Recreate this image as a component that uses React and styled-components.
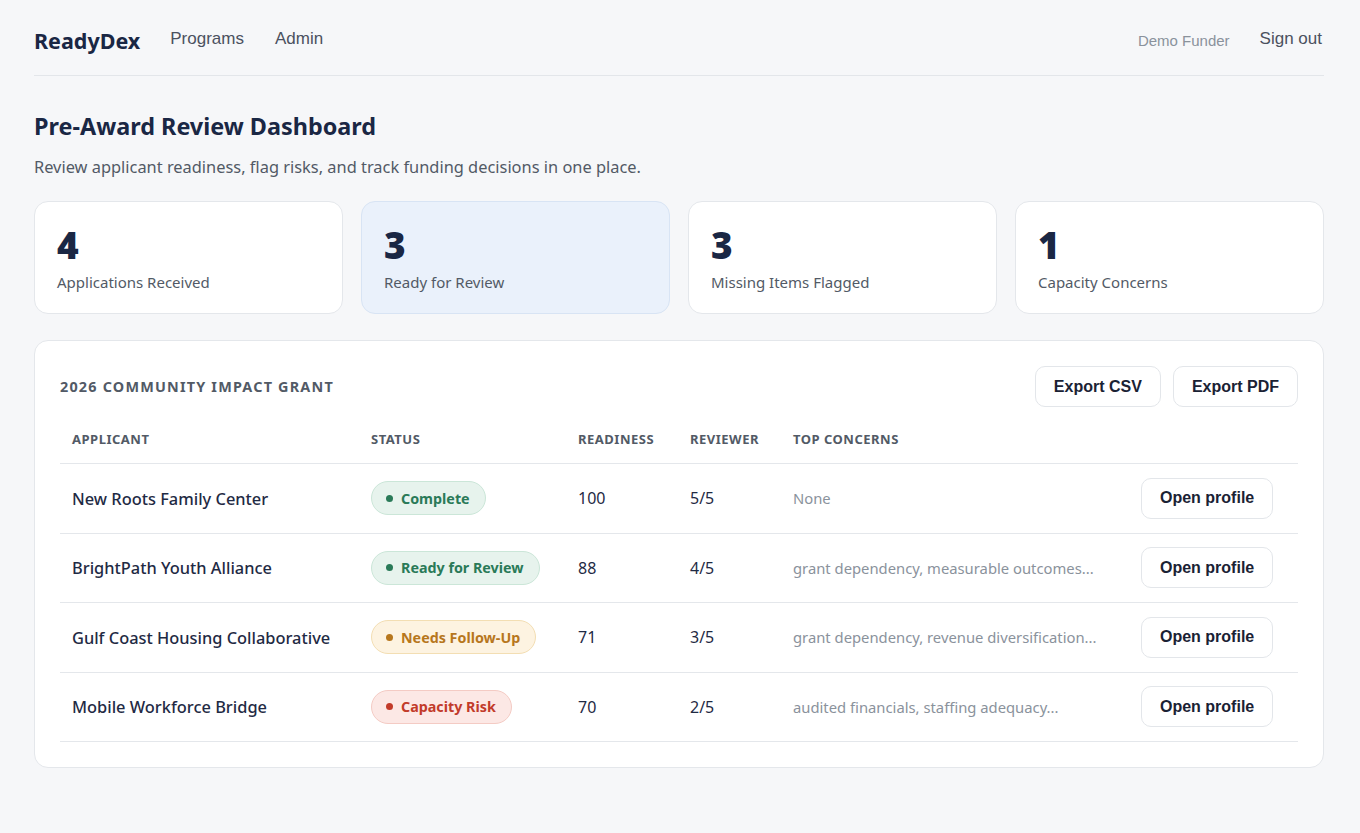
import React from "react";
import styled, { createGlobalStyle } from "styled-components";

const GlobalStyle = createGlobalStyle`
  * { box-sizing: border-box; }
  body {
    margin: 0;
    background: #f6f7f9;
    font-family: "Noto Sans", "Open Sans", sans-serif;
    color: #1f2a44;
  }
`;

const Page = styled.div`
  padding: 0 36px 40px 34px;
  min-height: 100vh;
`;

const Header = styled.header`
  height: 76px;
  display: flex;
  align-items: center;
  justify-content: space-between;
  border-bottom: 1px solid #e3e6ea;
`;

const NavLeft = styled.div`
  display: flex;
  align-items: center;
  gap: 31px;
`;

const Brand = styled.div`
  font-size: 21.5px;
  font-weight: 700;
  color: #1a2744;
  margin-top: 6px;
  margin-right: -1px;
`;

const NavLink = styled.a`
  font-family: "Liberation Sans", Arial, sans-serif;
  color: ${(p) => (p.muted ? "#8a929c" : "#4b5160")};
  font-size: ${(p) => (p.muted ? "15px" : "17px")};
  text-decoration: none;
  margin-top: ${(p) => (p.muted ? "6px" : "3px")};
`;

const NavRight = styled.div`
  display: flex;
  align-items: center;
  gap: 30px;
  margin-right: 2px;
`;

const Title = styled.h1`
  margin: 34px 0 0 0;
  font-size: 23.4px;
  font-weight: 700;
  color: #1a2744;
  line-height: 32px;
`;

const Subtitle = styled.p`
  margin: 13px 0 0 0;
  font-size: 16.4px;
  color: #525a66;
  line-height: 24px;
`;

const Stats = styled.div`
  display: grid;
  grid-template-columns: repeat(4, 1fr);
  gap: 18px;
  margin-top: 22px;
`;

const StatCard = styled.div`
  height: 113px;
  background: ${(p) => (p.highlight ? "#eaf1fb" : "#ffffff")};
  border: 1px solid ${(p) => (p.highlight ? "#d8e4f4" : "#e4e7eb")};
  border-radius: 14px;
  padding: 21px 22px;
`;

const StatValue = styled.div`
  font-size: 37px;
  font-weight: 900;
  color: #1a2744;
  line-height: 44px;
`;

const StatLabel = styled.div`
  font-size: 15px;
  color: #525a66;
  margin-top: 5px;
`;

const Panel = styled.section`
  margin-top: 26px;
  background: #ffffff;
  border: 1px solid #e4e7eb;
  border-radius: 14px;
  padding: 25px 25px 25px 25px;
`;

const PanelHead = styled.div`
  display: flex;
  align-items: center;
  justify-content: space-between;
`;

const PanelTitle = styled.h2`
  margin: 0;
  font-size: 14.4px;
  font-weight: 700;
  letter-spacing: 1.2px;
  color: #525a66;
  text-transform: uppercase;
`;

const Actions = styled.div`
  display: flex;
  gap: 12px;
`;

const Button = styled.button`
  font-family: "Liberation Sans", Arial, sans-serif;
  font-size: 16px;
  font-weight: 700;
  color: #1a2234;
  background: #ffffff;
  border: 1px solid #e3e6ea;
  border-radius: 10px;
  height: 41px;
  padding: 0 18px;
  cursor: pointer;
`;

const Table = styled.table`
  width: 100%;
  border-collapse: collapse;
  margin-top: 13px;
  table-layout: fixed;
`;

const Th = styled.th`
  text-align: left;
  font-size: 13px;
  font-weight: 700;
  letter-spacing: 0.5px;
  color: #525a66;
  text-transform: uppercase;
  padding: 10px 12px 15px 12px;
  border-bottom: 1px solid #e4e7eb;
  width: ${(p) => p.w || "auto"};
`;

const Td = styled.td`
  padding: 0 12px;
  height: 69.5px;
  border-bottom: 1px solid #e4e7eb;
  font-size: 16px;
  color: #1f2a44;
  white-space: nowrap;
`;

const Name = styled(Td)`
  font-weight: 500;
  font-size: 16.4px;
`;

const Concern = styled(Td)`
  font-size: 14.8px;
  color: #8a929c;
`;

const tones = {
  green: { bg: "#e7f3ed", border: "#cbe6d8", fg: "#2a7a58" },
  amber: { bg: "#fdf3e1", border: "#f3deb3", fg: "#b7771d" },
  red: { bg: "#fce8e5", border: "#f4cbc4", fg: "#c23b2a" },
};

const Badge = styled.span`
  display: inline-flex;
  align-items: center;
  gap: 8px;
  height: 34px;
  padding: 0 15px 0 14px;
  border-radius: 17px;
  font-size: 14.3px;
  font-weight: 700;
  background: ${(p) => tones[p.tone].bg};
  border: 1px solid ${(p) => tones[p.tone].border};
  color: ${(p) => tones[p.tone].fg};
  &::before {
    content: "";
    width: 7px;
    height: 7px;
    border-radius: 50%;
    background: ${(p) => tones[p.tone].fg};
  }
`;

const applicants = [
  { name: "New Roots Family Center", status: "Complete", tone: "green", readiness: 100, reviewer: "5/5", concerns: "None" },
  { name: "BrightPath Youth Alliance", status: "Ready for Review", tone: "green", readiness: 88, reviewer: "4/5", concerns: "grant dependency, measurable outcomes..." },
  { name: "Gulf Coast Housing Collaborative", status: "Needs Follow-Up", tone: "amber", readiness: 71, reviewer: "3/5", concerns: "grant dependency, revenue diversification..." },
  { name: "Mobile Workforce Bridge", status: "Capacity Risk", tone: "red", readiness: 70, reviewer: "2/5", concerns: "audited financials, staffing adequacy..." },
];

const stats = [
  { value: 4, label: "Applications Received" },
  { value: 3, label: "Ready for Review", highlight: true },
  { value: 3, label: "Missing Items Flagged" },
  { value: 1, label: "Capacity Concerns" },
];

export default function App() {
  return (
    <>
      <GlobalStyle />
      <Page>
        <Header>
          <NavLeft>
            <Brand>ReadyDex</Brand>
            <NavLink href="#">Programs</NavLink>
            <NavLink href="#">Admin</NavLink>
          </NavLeft>
          <NavRight>
            <NavLink muted>Demo Funder</NavLink>
            <NavLink href="#">Sign out</NavLink>
          </NavRight>
        </Header>

        <Title>Pre-Award Review Dashboard</Title>
        <Subtitle>Review applicant readiness, flag risks, and track funding decisions in one place.</Subtitle>

        <Stats>
          {stats.map((s) => (
            <StatCard key={s.label} highlight={s.highlight}>
              <StatValue>{s.value}</StatValue>
              <StatLabel>{s.label}</StatLabel>
            </StatCard>
          ))}
        </Stats>

        <Panel>
          <PanelHead>
            <PanelTitle>2026 Community Impact Grant</PanelTitle>
            <Actions>
              <Button>Export CSV</Button>
              <Button>Export PDF</Button>
            </Actions>
          </PanelHead>

          <Table>
            <thead>
              <tr>
                <Th w="299px">Applicant</Th>
                <Th w="207px">Status</Th>
                <Th w="112px">Readiness</Th>
                <Th w="103px">Reviewer</Th>
                <Th w="348px">Top Concerns</Th>
                <Th></Th>
              </tr>
            </thead>
            <tbody>
              {applicants.map((a) => (
                <tr key={a.name}>
                  <Name>{a.name}</Name>
                  <Td>
                    <Badge tone={a.tone}>{a.status}</Badge>
                  </Td>
                  <Td>{a.readiness}</Td>
                  <Td>{a.reviewer}</Td>
                  <Concern>{a.concerns}</Concern>
                  <Td>
                    <Button>Open profile</Button>
                  </Td>
                </tr>
              ))}
            </tbody>
          </Table>
        </Panel>
      </Page>
    </>
  );
}
